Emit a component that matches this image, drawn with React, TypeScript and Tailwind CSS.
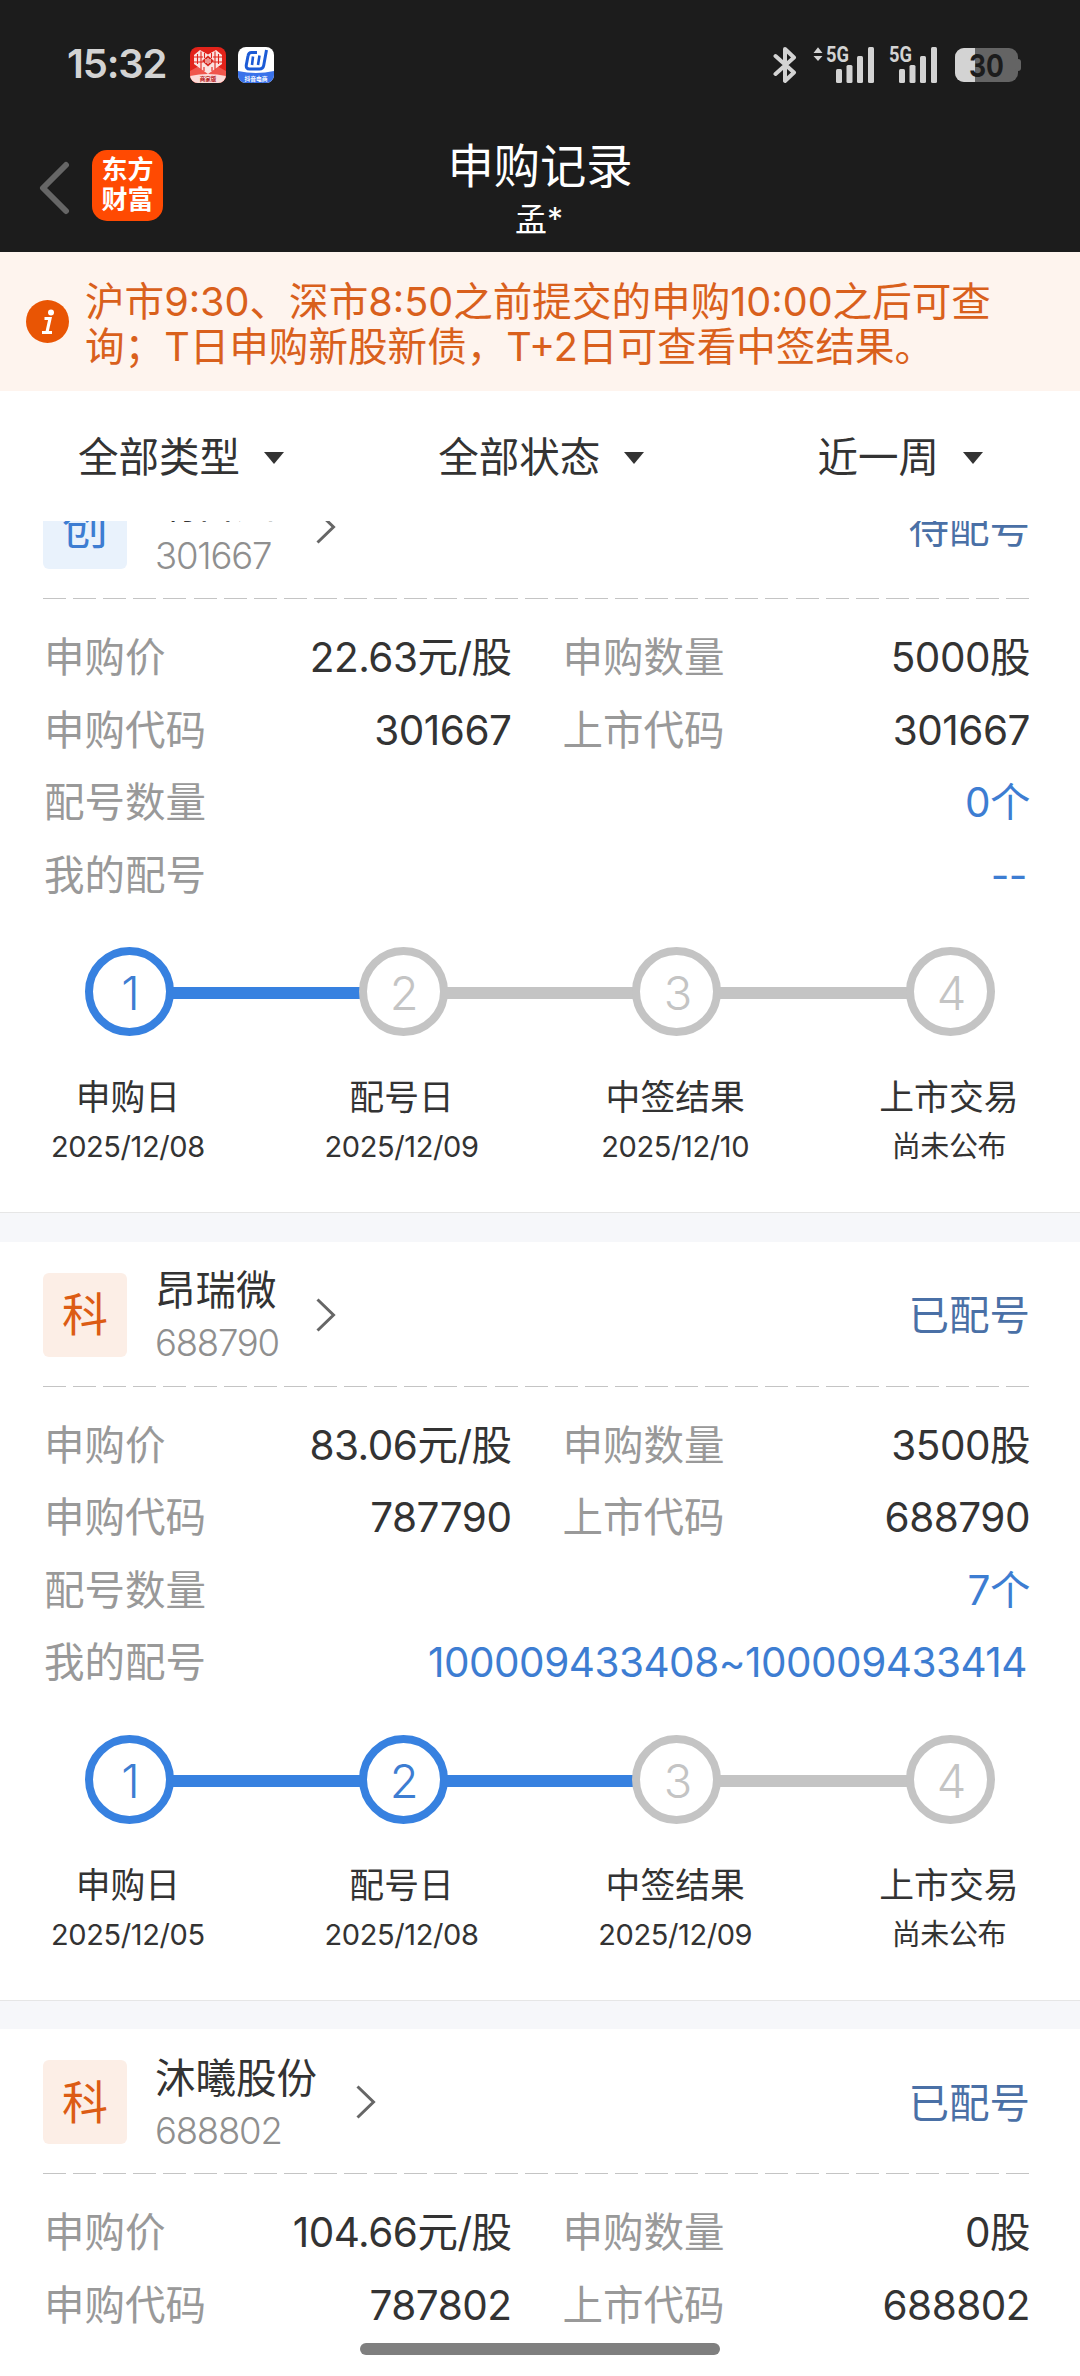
import type { ReactNode } from "react";

type Step = {
   label: string;
   date: string;
   done: boolean;
}

type RecordItem = {
   board: string;
   name: string;
   code: string;
   status: string;
   price: string;
   amount: string;
   buyCode: string;
   count?: string;
   numbers?: string;
   steps?: Step[];
}

const records: RecordItem[] = [
   {
      board: "创",
      name: "纳百川",
      code: "301667",
      status: "待配号",
      price: "22.63元/股",
      amount: "5000股",
      buyCode: "301667",
      count: "0个",
      numbers: "--",
      steps: [
         { label: "申购日", date: "2025/12/08", done: true },
         { label: "配号日", date: "2025/12/09", done: false },
         { label: "中签结果", date: "2025/12/10", done: false },
         { label: "上市交易", date: "尚未公布", done: false },
      ],
   }, {
      board: "科",
      name: "昂瑞微",
      code: "688790",
      status: "已配号",
      price: "83.06元/股",
      amount: "3500股",
      buyCode: "787790",
      count: "7个",
      numbers: "100009433408~100009433414",
      steps: [
         { label: "申购日", date: "2025/12/05", done: true },
         { label: "配号日", date: "2025/12/08", done: true },
         { label: "中签结果", date: "2025/12/09", done: false },
         { label: "上市交易", date: "尚未公布", done: false },
      ],
   }, {
      board: "科",
      name: "沐曦股份",
      code: "688802",
      status: "已配号",
      price: "104.66元/股",
      amount: "0股",
      buyCode: "787802",
   }
]

const Signal = ({ arrows }: { arrows?: boolean }) => (
   <svg className="overflow-visible" width="62" height="38" viewBox="0 0 62 38" fill="#d3d3d3">
      {arrows && <path d="M0.5 7 L5 1.2 L9.5 7Z M0.5 10 L5 15 L9.5 10Z" />}
      <text x="13" y="16" fontSize="22" fontWeight="700" fontFamily="Roboto" textLength="23" lengthAdjust="spacingAndGlyphs">5G</text>
      <rect x="23" y="23" width="6" height="14" rx="1.5" />
      <rect x="33.5" y="19" width="6" height="18" rx="1.5" />
      <rect x="44" y="10" width="6" height="27" rx="1.5" />
      <rect x="55" y="1" width="6" height="36" rx="1.5" />
   </svg>
)

const StatusBar = () => (
   <div className="flex h-[130px] items-center justify-between pl-[67px] pr-[59px]">
      <div className="flex items-center">
         <span className="w-[123px] pb-[3px] text-[40px] font-semibold leading-none tracking-[-1.2px] text-[#d3d3d3]">15:32</span>
         <svg width="36" height="36" viewBox="0 0 36 36">
            <defs>
               <clipPath id="shop"><rect width="36" height="36" rx="8" /></clipPath>
            </defs>
            <g clipPath="url(#shop)">
               <rect width="36" height="36" fill="#e2231a" />
               <path d="M0 24 L18 14 L36 24 V36 H0Z" fill="#f0564c" />
               <path d="M18 27 L4 17 V8 L10 3 L18 7.500 L26 3 L32 8 V17Z" fill="#fbe3e0" />
               <path d="M7.500 7v10M11 4.500v18M25 4.500v18M28.500 7v10M4 10h9M23 10h9M4 15h9M23 15h9M14.500 6v5M21.500 6v5M14 20v4M22 20v4" stroke="#e2231a" strokeWidth="1.100" />
               <path d="M18 8.500 L24 14 L18 19.500 L12 14Z" fill="#d8281f" />
               <path d="M16 12v4M18 11v6M20 12v4" stroke="#fff" strokeWidth="1" />
               <path d="M0 29 Q18 25 36 29 V36 H0Z" fill="#fbdcd9" />
               <text x="18" y="33.800" fontSize="5.500" fontWeight="700" fill="#b3201a" textAnchor="middle" fontFamily="Noto Sans CJK SC">商家版</text>
            </g>
         </svg>
         <svg className="ml-3" width="36" height="36" viewBox="0 0 36 36">
            <defs>
               <clipPath id="desk"><rect width="36" height="36" rx="8" /></clipPath>
            </defs>
            <g clipPath="url(#desk)">
               <rect width="36" height="36" fill="#fff" />
               <path d="M19 5.500 H13.500 Q10.500 5.500 10 9 L8.300 18 Q7.800 22 11.500 22 H21.500 Q25 22 25.700 18.500 L28.500 3" fill="none" stroke="#1c5bd6" strokeWidth="3" />
               <path d="M15 9.500 L14 18 M21.500 8.500 L20 18" stroke="#1c5bd6" strokeWidth="2.600" />
               <path d="M0 24 Q18 28 36 24 V36 H0Z" fill="#3a72ea" />
               <text x="18" y="33.800" fontSize="5.800" fontWeight="700" fill="#fff" textAnchor="middle" fontFamily="Noto Sans CJK SC">抖音电商</text>
            </g>
         </svg>
      </div>
      <div className="flex items-center">
         <svg width="24" height="38" viewBox="0 0 24 38" fill="none" stroke="#d3d3d3" strokeWidth="4" strokeLinejoin="round" strokeLinecap="round">
            <path d="M2.500 10 L21 26.500 L12 35 V3 L21 11.500 L2.500 28" />
         </svg>
         <div className="ml-4"><Signal arrows /></div>
         <div className="ml-px"><Signal /></div>
         <svg className="ml-[17px]" width="66" height="36" viewBox="0 0 66 36">
            <defs>
               <clipPath id="level"><rect width="20" height="36" /></clipPath>
            </defs>
            <rect y="1" width="63" height="34" rx="9" fill="#646464" />
            <rect x="60" y="12" width="6" height="12" rx="3" fill="#646464" />
            <rect y="1" width="63" height="34" rx="9" fill="#d3d3d3" clipPath="url(#level)" />
            <text x="31.500" y="29.500" fontSize="31" fontWeight="700" fill="#1c1c1c" textAnchor="middle" textLength="35" lengthAdjust="spacingAndGlyphs" fontFamily="Inter">30</text>
         </svg>
      </div>
   </div>
)

const TitleBar = () => (
   <div className="grid h-[122px] grid-cols-3">
      <div className="flex items-start pl-[39px] pt-5">
         <svg className="mt-[11px]" width="32" height="54" viewBox="0 0 32 54" fill="none" stroke="#666" strokeWidth="6" strokeLinecap="round" strokeLinejoin="round">
            <path d="M27 4 L4 27 L27 50" />
         </svg>
         <div className="ml-[21px] flex h-[71px] w-[71px] flex-col items-center justify-center rounded-[15px] bg-[#ff4a02] pb-0.5 text-[26px] font-bold leading-[30px] text-white">
            <span>东方</span>
            <span>财富</span>
         </div>
      </div>
      <div className="flex flex-col items-center whitespace-nowrap pt-[9px] text-white">
         <h1 className="text-[46.3px] leading-[54px]">申购记录</h1>
         <p className="pr-0.5 pt-[9px] text-[32px] leading-9">孟*</p>
      </div>
   </div>
)

const Notice = () => (
   <div className="flex h-[139px] bg-[#fef4ee] pl-[26px] pt-[27px] text-[#d9601c]">
      <svg className="mt-[21px] shrink-0" width="43" height="43" viewBox="0 0 43 43">
         <circle cx="21.500" cy="21.500" r="21.500" fill="#e95504" />
         <circle cx="25" cy="12.500" r="3" fill="#fff" />
         <path d="M18.500 18.500 H24 L21 32 M16 32.500 H26" fill="none" stroke="#fff" strokeWidth="3.200" />
      </svg>
      <div className="ml-4 mt-px whitespace-nowrap text-[39.6px] leading-[44.5px]">
         <p>沪市9:30、深市8:50之前提交的申购10:00之后可查</p>
         <p>询；T日申购新股新债，T+2日可查看中签结果。</p>
      </div>
   </div>
)

const Filter = ({ text }: { text: string }) => (
   <div className="flex items-center">
      <span>{text}</span>
      <svg className="ml-6" width="20" height="12" viewBox="0 0 20 12" fill="#333">
         <path d="M0 0 H20 L10 12Z" />
      </svg>
   </div>
)

const Row = ({ label, children }: { label: string; children: ReactNode }) => (
   <div className="flex flex-1 justify-between">
      <span className="pl-px text-[#999]">{label}</span>
      <span className="tracking-[-0.5px]">{children}</span>
   </div>
)

const Steps = ({ steps }: { steps: Step[] }) => (
   <div>
      <div className="flex items-center pl-[42px]">
         {steps.map((step, index) => (
            <div key={index} className="flex items-center">
               <div className={`flex h-[89px] w-[89px] items-center justify-center rounded-full border-[8.5px] pt-1 pl-0.5 text-[47px] font-light ${step.done ? "border-[#3781e0] text-[#3d7dd2]" : "border-[#c4c4c4] text-[#c4c4c4]"}`}>
                  {index + 1}
               </div>
               {index < steps.length - 1 && <div className={`mt-[3px] -mx-px h-3 w-[186.7px] ${step.done ? "bg-[#3781e0]" : "bg-[#c4c4c4]"}`}></div>}
            </div>
         ))}
      </div>
      <div className="-ml-[52px] mt-[37px] flex">
         {steps.map((step, index) => (
            <div key={index} className="flex w-[273.7px] shrink-0 flex-col items-center text-[#333]">
               <span className="text-[34.8px] leading-[48px]">{step.label}</span>
               <span className="mt-1.5 text-[29px] leading-10 tracking-[-0.4px]">{step.date}</span>
            </div>
         ))}
      </div>
   </div>
)

const Card = ({ data }: { data: RecordItem }) => (
   <section className="h-[758px] bg-white pl-[43px] pr-[50px] pt-[31px]">
      <div className="flex h-[84px] items-center">
         <div className={`flex h-[84px] w-[84px] items-center justify-center rounded-md text-[46px] ${data.board === "创" ? "bg-[#e9f2fc] text-[#3d7dd2]" : "bg-[#fceee6] text-[#dc5c14]"}`}>
            {data.board}
         </div>
         <div className="ml-7 pt-[3px]">
            <p className="text-[40.5px] leading-[52px] text-[#333]">{data.name}</p>
            <p className="-mr-3 pt-0.5 text-[36.5px] font-light leading-[48px] tracking-[-1.2px] text-[#8f8f8f]">{data.code}</p>
         </div>
         <svg className="ml-[39px]" width="20" height="34" viewBox="0 0 20 34" fill="none" stroke="#666" strokeWidth="3">
            <path d="M1.500 1.500 L17.500 17 L1.500 32.500" />
         </svg>
         <span className="ml-auto pt-1 text-[40.5px] text-[#4a70a6]">{data.status}</span>
      </div>
      <div className="mt-[29px] h-px bg-[repeating-linear-gradient(90deg,#c4c4c4_0px,#c4c4c4_23px,transparent_23px,transparent_30.1px)]"></div>
      <div className="mt-[23px] text-[40.5px] leading-[72.5px] text-[#333]">
         <div className="flex gap-[50px]">
            <Row label="申购价">{data.price}</Row>
            <Row label="申购数量">{data.amount}</Row>
         </div>
         <div className="flex gap-[50px]">
            <Row label="申购代码">{data.buyCode}</Row>
            <Row label="上市代码">{data.code}</Row>
         </div>
         {data.count && <Row label="配号数量"><span className="text-[#3d7dd2]">{data.count}</span></Row>}
         {data.numbers && <Row label="我的配号"><span className="pr-[3px] text-[#3d7dd2]">{data.numbers}</span></Row>}
      </div>
      {data.steps && (
         <div className="mt-[35px]">
            <Steps steps={data.steps} />
         </div>
      )}
   </section>
)

export default function App() {
   return (
      <div className="flex h-[2376px] w-[1080px] flex-col overflow-hidden bg-white font-['Inter','Noto_Sans_CJK_SC',sans-serif]">
         <header className="shrink-0 bg-[#1c1c1c]">
            <StatusBar />
            <TitleBar />
         </header>
         <Notice />
         <nav className="flex h-[130px] shrink-0 items-center justify-between pl-[78px] pr-[97px] pt-1 text-[40.5px] text-[#333]">
            <Filter text="全部类型" />
            <div className="pr-[19px]">
               <Filter text="全部状态" />
            </div>
            <Filter text="近一周" />
         </nav>
         <main className="min-h-0 flex-1 overflow-hidden">
            <div className="-mt-[67px]">
               {records.map((data, index) => (
                  <div key={index}>
                     {index > 0 && <div className="h-[29.5px] border-t border-[#e6e6e6] bg-[#f6f7fa]"></div>}
                     <Card data={data} />
                  </div>
               ))}
            </div>
         </main>
         {/* system gesture bar */}
         <footer className="flex h-[33px] shrink-0 justify-center bg-white">
            <div className="h-3 w-[360px] rounded-full bg-[#7f7f7f]"></div>
         </footer>
      </div>
   )
}
